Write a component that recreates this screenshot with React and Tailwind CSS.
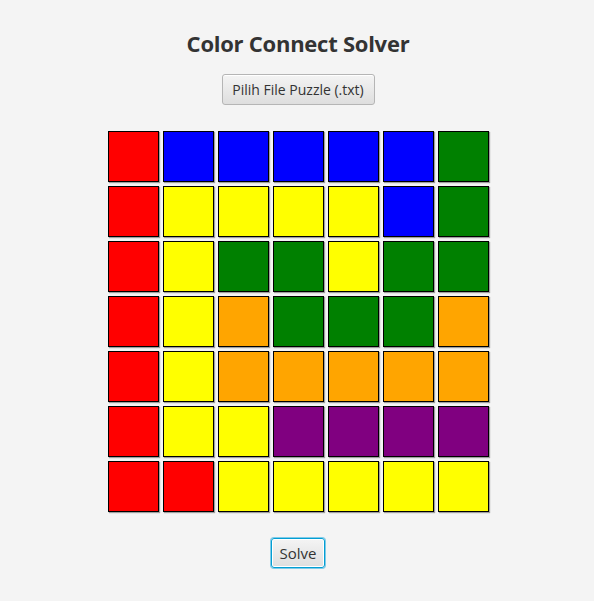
import React from 'react';

const COLORS = {
  R: 'bg-[#ff0000]',
  B: 'bg-[#0000ff]',
  G: 'bg-[#008000]',
  Y: 'bg-[#ffff00]',
  O: 'bg-[#ffa500]',
  P: 'bg-[#800080]',
};

const PUZZLE = [
  'RBBBBBG',
  'RYYYYBG',
  'RYGGYGG',
  'RYOGGGO',
  'RYOOOOO',
  'RYYPPPP',
  'RRYYYYY',
];

function Cell({ c }) {
  return (
    <div
      className={`w-[51px] h-[51px] border border-black shadow-[1px_1px_1px_rgba(0,0,0,0.35)] ${COLORS[c]}`}
    />
  );
}

export default function App() {
  return (
    <div
      className="min-h-[601px] bg-[#f4f4f4] flex flex-col items-center pt-[28px] pl-[2px] text-[#333333]"
      style={{ fontFamily: '"Open Sans", "Noto Sans", sans-serif' }}
    >
      {/* Title */}
      <h1 className="text-[22px] leading-[30px] font-bold tracking-[-0.25px]">Color Connect Solver</h1>

      {/* File picker */}
      <button className="mt-[16px] h-[31px] w-[153px] rounded-[3px] border border-[#b5b5b5] bg-gradient-to-b from-[#f4f4f4] to-[#dedede] text-[14px] text-[#333333] shadow-[inset_0_1px_0_#ffffff]">
        Pilih File Puzzle (.txt)
      </button>

      {/* Board */}
      <div className="mt-[26px] grid grid-cols-7 gap-[4px]">
        {PUZZLE.map((row, r) =>
          row.split('').map((c, i) => <Cell key={`${r}-${i}`} c={c} />)
        )}
      </div>

      {/* Solve */}
      <button className="mt-[26px] h-[30px] w-[54px] rounded-[3px] border border-[#039ed3] bg-gradient-to-b from-[#f4f4f4] to-[#dedede] text-[15px] text-[#333333] shadow-[0_0_0_1px_#7fcbe8,inset_0_0_0_1px_#ffffff]">
        Solve
      </button>
    </div>
  );
}
